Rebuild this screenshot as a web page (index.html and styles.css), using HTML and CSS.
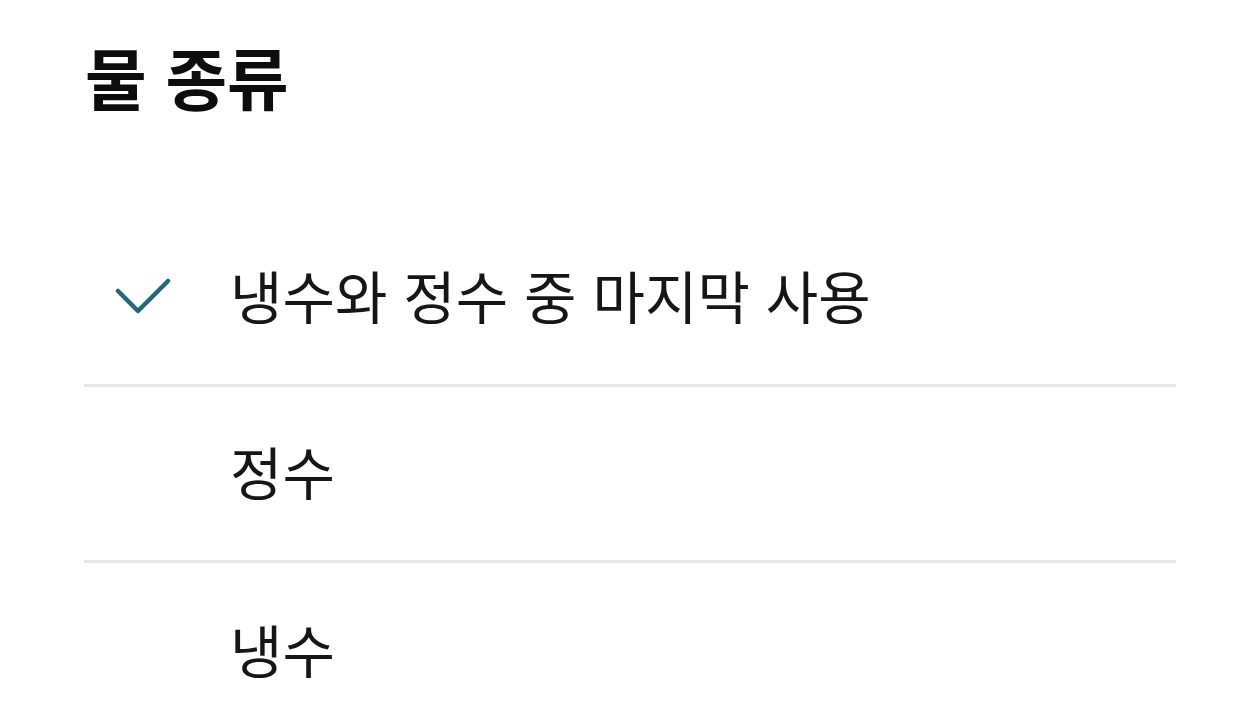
FILE: index.html
```html
<!DOCTYPE html>
<html lang="ko">
<head>
<meta charset="utf-8">
<link rel="stylesheet" href="styles.css">
</head>
<body>
<div class="page">
  <h1 class="title">물 종류</h1>
  <ul class="options">
    <li class="option selected">
      <span class="check">
        <svg width="60" height="40" viewBox="0 0 60 40"><polyline points="4,13 24,33 54,3" fill="none" stroke="#21697a" stroke-width="4.5" stroke-linecap="round" stroke-linejoin="round"/></svg>
      </span>
      <span class="label">냉수와 정수 중 마지막 사용</span>
    </li>
    <li class="option">
      <span class="check"></span>
      <span class="label">정수</span>
    </li>
    <li class="option">
      <span class="check"></span>
      <span class="label">냉수</span>
    </li>
  </ul>
</div>
</body>
</html>
```
FILE: styles.css
```css
html, body {
  margin: 0;
  padding: 0;
  background: #ffffff;
}
body {
  font-family: "Noto Sans CJK KR", "Noto Sans", sans-serif;
  color: #111111;
  overflow: hidden;
}
.page {
  padding: 0 84px;
}
.title {
  margin: 0;
  padding-top: 36px;
  font-size: 67px;
  line-height: 1.2;
  font-weight: 700;
  color: #0d0d0d;
  padding-left: 1px;
}
.options {
  list-style: none;
  margin: 0;
  padding: 0;
  margin-top: 95px;
}
.option {
  height: 176px;
  display: flex;
  align-items: center;
  box-sizing: border-box;
  border-bottom: 3px solid #e6e6e6;
}
.option:last-child {
  border-bottom: none;
}
.check {
  width: 146px;
  display: flex;
  align-items: center;
  padding-left: 30px;
  box-sizing: border-box;
}
.check svg {
  display: block;
}
.label {
  font-size: 57px;
  line-height: 1;
  padding-bottom: 6px;
  color: #161616;
  font-weight: 400;
}
```
